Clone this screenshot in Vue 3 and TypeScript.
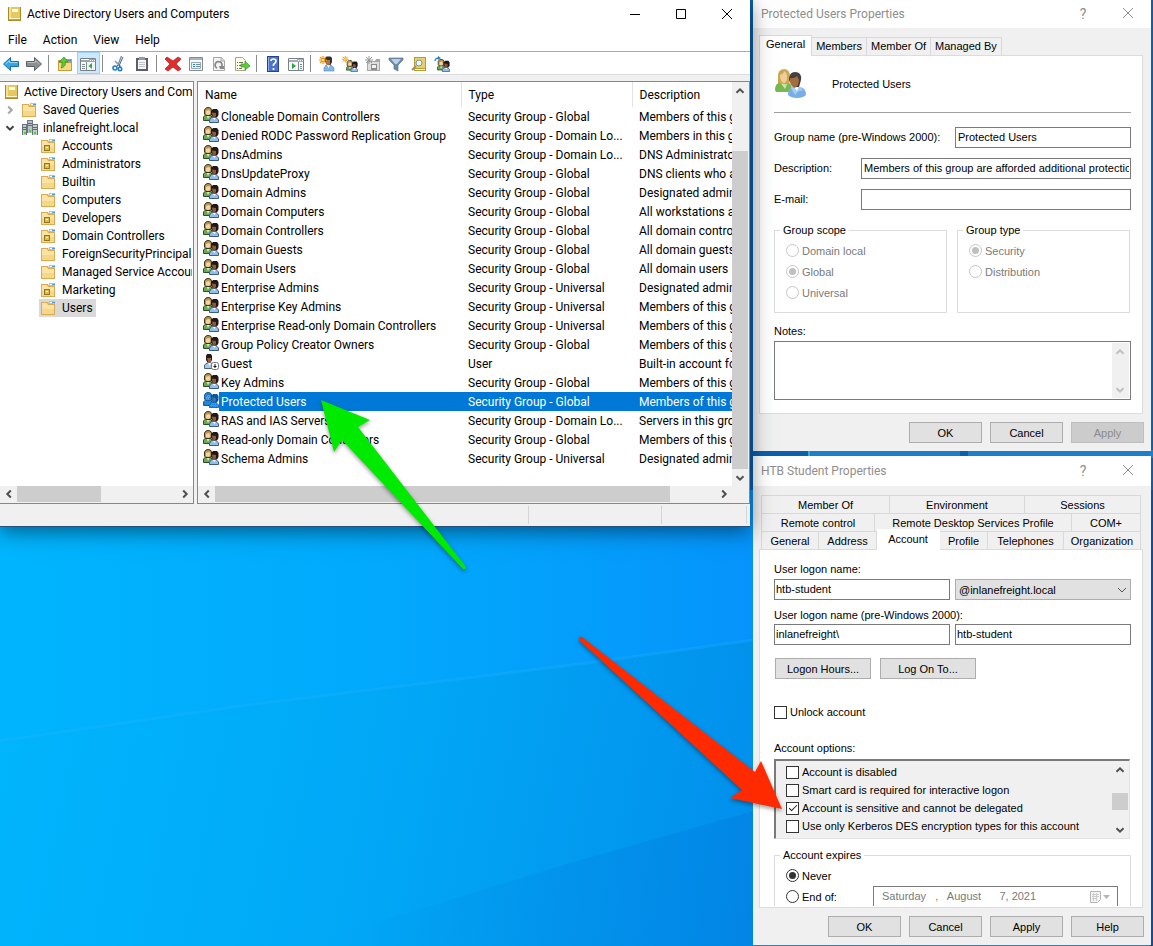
<script setup lang="ts">
import { ref } from 'vue'

interface TreeNode { label: string; icon: string }
interface DirectoryEntry { name: string; type: string; description: string; icon?: string }

const tools: string[][] = [
  ['back', 'forward'],
  ['folder-up', 'tree-pane'],
  ['cut', 'clipboard'],
  ['delete', 'properties', 'refresh', 'export'],
  ['help', 'action-pane'],
  ['new-user', 'new-group', 'new-ou', 'filter', 'find', 'add-member'],
]

const nodes: TreeNode[] = [
  { label: 'Accounts', icon: 'ou' },
  { label: 'Administrators', icon: 'ou' },
  { label: 'Builtin', icon: 'folder' },
  { label: 'Computers', icon: 'folder' },
  { label: 'Developers', icon: 'ou' },
  { label: 'Domain Controllers', icon: 'ou' },
  { label: 'ForeignSecurityPrincipals', icon: 'folder' },
  { label: 'Managed Service Accounts', icon: 'folder' },
  { label: 'Marketing', icon: 'ou' },
  { label: 'Users', icon: 'folder' },
]
const selectedNode = ref('Users')

const GLOBAL = 'Security Group - Global'
const LOCAL = 'Security Group - Domain Lo...'
const UNIVERSAL = 'Security Group - Universal'
const entries: DirectoryEntry[] = [
  { name: 'Cloneable Domain Controllers', type: GLOBAL, description: 'Members of this group' },
  { name: 'Denied RODC Password Replication Group', type: LOCAL, description: 'Members in this group' },
  { name: 'DnsAdmins', type: LOCAL, description: 'DNS Administrators' },
  { name: 'DnsUpdateProxy', type: GLOBAL, description: 'DNS clients who are' },
  { name: 'Domain Admins', type: GLOBAL, description: 'Designated administrators' },
  { name: 'Domain Computers', type: GLOBAL, description: 'All workstations and' },
  { name: 'Domain Controllers', type: GLOBAL, description: 'All domain controllers' },
  { name: 'Domain Guests', type: GLOBAL, description: 'All domain guests' },
  { name: 'Domain Users', type: GLOBAL, description: 'All domain users' },
  { name: 'Enterprise Admins', type: UNIVERSAL, description: 'Designated administrators' },
  { name: 'Enterprise Key Admins', type: UNIVERSAL, description: 'Members of this group' },
  { name: 'Enterprise Read-only Domain Controllers', type: UNIVERSAL, description: 'Members of this group' },
  { name: 'Group Policy Creator Owners', type: GLOBAL, description: 'Members of this group' },
  { name: 'Guest', type: 'User', description: 'Built-in account for', icon: 'guest' },
  { name: 'Key Admins', type: GLOBAL, description: 'Members of this group' },
  { name: 'Protected Users', type: GLOBAL, description: 'Members of this group' },
  { name: 'RAS and IAS Servers', type: LOCAL, description: 'Servers in this group' },
  { name: 'Read-only Domain Controllers', type: GLOBAL, description: 'Members of this group' },
  { name: 'Schema Admins', type: UNIVERSAL, description: 'Designated administrators' },
]
const selectedEntry = ref('Protected Users')

const groupTabs = ['General', 'Members', 'Member Of', 'Managed By']
const groupTab = ref('General')
const groupName = ref('Protected Users')
const groupDescription = ref('Members of this group are afforded additional protections against authentication')
const groupEmail = ref('')

const userTabRows: string[][] = [
  ['Member Of', 'Environment', 'Sessions'],
  ['Remote control', 'Remote Desktop Services Profile', 'COM+'],
  ['General', 'Address', 'Account', 'Profile', 'Telephones', 'Organization'],
]
const userTab = ref('Account')
const logonName = ref('htb-student')
const legacyDomain = ref('inlanefreight\\')
const legacyName = ref('htb-student')
const unlock = ref(false)
const options = ref([
  { label: 'Account is disabled', on: false },
  { label: 'Smart card is required for interactive logon', on: false },
  { label: 'Account is sensitive and cannot be delegated', on: true },
  { label: 'Use only Kerberos DES encryption types for this account', on: false },
])
const expires = ref('never')
const expiryDate = 'Saturday   ,   August      7, 2021'
</script>

<template>
  <div class="desktop">
    <svg class="symbols" width="0" height="0" aria-hidden="true">
      <symbol id="book" viewBox="0 0 16 16">
        <path d="M2 1h13v14H2z" fill="#a8892c" /><path d="M3 1h11v11H3z" fill="#e6c95c" /><path d="M3 1h2v11H3z" fill="#f4e08c" />
        <path d="M6 3h6v3H6z" fill="#fffef0" /><path d="M3 12h11v2H3z" fill="#fff6cf" /><path d="M3 13h11v1H3z" fill="#c9a93c" />
      </symbol>
      <symbol id="folder" viewBox="0 0 16 16">
        <path d="M8 1h6v4H8z" fill="#e9bd58" /><path d="M9 2h4v1H9z" fill="#fff" /><path d="M11 2h3v1h-3z" fill="#4a9be0" />
        <path d="M0 2h7l1 2h6v11H0z" fill="#d9ab52" /><path d="M1 3h5l1 2h6v9H1z" fill="#fbe3a4" /><path d="M1 9h12v5H1z" fill="#f6d687" />
      </symbol>
      <symbol id="ou" viewBox="0 0 16 16">
        <use href="#folder" /><path d="M3 7h6v6H3z" fill="#947520" /><path d="M4 8h4v4H4z" fill="#d9be56" /><path d="M5 9h2v1H5z" fill="#fff8d0" />
      </symbol>
      <symbol id="servers" viewBox="0 0 16 16">
        <path d="M5 0h6v13H5z" fill="#707982" /><path d="M6 1h4v12H6z" fill="#b8c0c7" /><path d="M0 4h5v11H0zM10 4h6v11h-6z" fill="#69727b" />
        <path d="M1 5h3v10H1zM11 5h4v10h-4z" fill="#c3cad0" /><path d="M6 3.500h4M6 5.500h4M1 7.500h3M1 9.500h3M11 7.500h4M11 9.500h4" stroke="#5f6871" />
        <path d="M2 12h2v2H2zM7 10h2v2H7zM12 12h2v2h-2z" fill="#45d827" />
      </symbol>
      <symbol id="group" viewBox="0 0 16 16">
        <path d="M.5 13.500V10L2.500 8H7l2 2v3.500z" fill="#6aa851" stroke="#2e4f26" /><path d="M3.500 8.500h3.500L5 12z" fill="#d8ecc8" />
        <path d="M1.500 7V3L3 1 5 .5 7.500 1 8.500 3v4L7 8.500H3z" fill="#b79a50" stroke="#3d3119" /><path d="M3 4l3-1 1 1v3L5 8 3 7z" fill="#f3d3a6" />
        <path d="M6.500 15.500V13l2-2.500H13l2.500 2.500v2.500z" fill="#93bdea" stroke="#3b5d84" /><path d="M9.500 10.500H13L11.500 13z" fill="#fff" />
        <path d="M8 8V4l2-2h4l1.500 2v4L14 10.500h-4z" fill="#1f1816" /><path d="M9 5.500l4 .5v3L11.500 10.500 9.500 9z" fill="#8c5a37" />
      </symbol>
      <symbol id="group-selected" viewBox="0 0 16 16">
        <path d="M.5 13.500V10L2.500 8H7l2 2v3.500z" fill="#3288ad" stroke="#125c98" />
        <path d="M1.500 7V3L3 1 5 .5 7.500 1 8.500 3v4L7 8.500H3z" fill="#3783b9" stroke="#155996" /><path d="M3 4l3-1 1 1v3L5 8 3 7z" fill="#6ba2ca" />
        <path d="M6.500 15.500V13l2-2.500H13l2.500 2.500v2.500z" fill="#4796dd" stroke="#176bbc" />
        <path d="M8 8V4l2-2h4l1.500 2v4L14 10.500h-4z" fill="#0d508f" /><path d="M9 5.500l4 .5v3L11.500 10.500 9.500 9z" fill="#3f75a8" />
        <path d="M2 2.500h12M1 4.500h14M2 6.500h13M2 8.500h12M1 10.500h13M1 12.500h14M7 14.500h8" stroke="#0877d4" stroke-dasharray="1 1" opacity=".7" />
      </symbol>
      <symbol id="guest" viewBox="0 0 16 16">
        <path d="M1.500 14.500V11L4 9h4l3 2v3.500z" fill="#a7c7e7" stroke="#48627f" /><path d="M5 9h3l-1.500 3z" fill="#fff" />
        <path d="M3 6V2l1-2h4l1 2v4L7.500 8.500h-3z" fill="#241b17" /><path d="M4 4h4v3L6.500 9 5 8z" fill="#95613c" />
        <rect x="8.500" y="8.500" width="7" height="7" rx="2" fill="#fff" stroke="#777" /><path d="M11.500 10h1v2H14l-2 2-2-2h1.500z" fill="#111" />
      </symbol>
      <symbol id="person" viewBox="0 0 16 16">
        <path d="M5 15v-3l2-3h5l3 3v3z" fill="#86b5e4" stroke="#5885b4" stroke-width=".6" /><path d="M8 9h3L9.500 12z" fill="#fff" />
        <path d="M6 6V2L7.500.5h4L13 2v4l-1.500 3h-3z" fill="#3b2c22" /><path d="M6.500 4H11v4l-1 1.500L7.500 8.500z" fill="#a8744b" />
      </symbol>
      <symbol id="spark" viewBox="0 0 16 16"><path d="M4 0v8M0 4h8M1 1l6 6M7 1L1 7" stroke="#ee9211" stroke-width="1.200" /><path d="M3 3h2v2H3z" fill="#ffe680" /></symbol>
      <symbol id="back" viewBox="0 0 16 16"><path d="M.5 8l7-6.500v4h8v5h-8v4z" fill="#36a7e5" stroke="#176fab" /><path d="M2.500 8l4-3.500v2h8" fill="none" stroke="#92dafd" /></symbol>
      <symbol id="forward" viewBox="0 0 16 16"><path d="M15.500 8l-7-6.500v4h-8v5h8v4z" fill="#8b8f92" stroke="#5d6265" /><path d="M1.500 6.500h8v-2l4 3.500" fill="none" stroke="#b9bdc0" /></symbol>
      <symbol id="folder-up" viewBox="0 0 16 16"><path d="M1 4h6l1-1h7v12H1z" fill="#c99d3c" /><path d="M2 7h12v7H2z" fill="#f7d985" /><path d="M11 4h3v1h-3z" fill="#4695d1" /><path d="M4 12c4-1 5-4 4-6h3L7 1 2 6h3c0 3 0 4-1 6z" fill="#60ca34" stroke="#288b1f" stroke-width=".7" /></symbol>
      <symbol id="tree-pane" viewBox="0 0 16 16"><path d="M.5 2.500h15v12H.5z" fill="#fff" stroke="#75808b" /><path d="M1 3h14v3H1z" fill="#9ba7b1" /><path d="M1 3.500h8M10 4.500h1M12 4.500h1M14 4.500h1" stroke="#fff" /><path d="M6.500 6v8M2 8.500h3M2 10.500h3M2 12.500h3" stroke="#7d8993" /><path d="M7 6h8v8H7z" fill="#f1f5f8" /><path d="M12 7v6L8.500 10z" fill="#2eaa3b" /></symbol>
      <symbol id="action-pane" viewBox="0 0 16 16"><path d="M.5 2.500h15v12H.5z" fill="#f7f8f8" stroke="#7a8288" /><path d="M1 3h14v3H1z" fill="#a5adb3" /><path d="M1 3.500h8M10 4.500h1M12 4.500h1M14 4.500h1" stroke="#fff" /><path d="M10.500 6v8M12 8.500h2M12 10.500h2M12 12.500h2" stroke="#7c8b98" /><path d="M4 7v6l4-3z" fill="#26a33a" /></symbol>
      <symbol id="cut" viewBox="0 0 16 16"><path d="M10.500 0L7 9M4 5l6 6" stroke="#8199ae" stroke-width="1.500" /><path d="M12 1L8 10M7 9l-2 2M8 9l1 3" stroke="#466b8a" /><circle cx="4" cy="12" r="2" fill="none" stroke="#237fc4" stroke-width="1.600" /><circle cx="9" cy="13" r="1.700" fill="none" stroke="#237fc4" stroke-width="1.600" /></symbol>
      <symbol id="clipboard" viewBox="0 0 16 16"><path d="M2 2h12v13H2z" fill="#5c6064" /><path d="M4 4h8v9H4z" fill="#f5f6f7" /><path d="M5 1h6v3H5z" fill="#989da1" /><path d="M5 6.500h6M5 8.500h6M5 10.500h6" stroke="#c2c6ca" /></symbol>
      <symbol id="delete" viewBox="0 0 16 16"><path d="M2 1l6 4 5-4 3 2-5 5 5 5-3 2-5-4-5 4-3-2 5-5-5-5z" fill="#e42d2b" stroke="#ad1719" stroke-width=".7" /></symbol>
      <symbol id="properties" viewBox="0 0 16 16"><path d="M1.500 1.500h13v13h-13z" fill="#f8fafb" stroke="#838c93" /><path d="M2 2h12v2H2z" fill="#abb4bb" /><path d="M3.500 6.500h9v6h-9z" fill="#edf4fa" stroke="#97a8b5" /><path d="M5 8h2v1H5zM5 10h2v1H5z" fill="#2b81c1" /><path d="M8 8.500h4M8 10.500h4" stroke="#7090aa" /></symbol>
      <symbol id="refresh" viewBox="0 0 16 16"><path d="M2.500 1.500h8l3 3v10h-11z" fill="#f4f4f4" stroke="#a6a6a6" /><path d="M10 1v4h4" fill="#ddd" stroke="#aaa" /><path d="M6 12.200A3.500 3.500 0 1 1 10.500 11" fill="none" stroke="#888" stroke-width="1.700" /><path d="M8 10h5v3H9z" fill="#888" /></symbol>
      <symbol id="export" viewBox="0 0 16 16"><path d="M1.500 1.500h7l3 3v10h-10z" fill="#fffce9" stroke="#aaa287" /><path d="M3 6.500h1M5 6.500h4M3 9.500h1M5 9.500h4M3 12.500h1M5 12.500h3" stroke="#6d6f62" /><path d="M7 8h4V5l5 5-5 4v-3H7z" fill="#62cc32" stroke="#34972a" stroke-width=".7" /></symbol>
      <symbol id="help" viewBox="0 0 16 16"><path d="M2 0h12v16H2z" fill="#24428e" /><path d="M3 1h10v14H3z" fill="#4a72ce" /><path d="M3 1h1v14H3z" fill="#91acea" /><path d="M6 5q0-2 2.500-2T11 5q0 1.500-1.500 2.500T8.500 10M8.500 12v2" fill="none" stroke="#fff" stroke-width="1.700" /></symbol>
      <symbol id="new-user" viewBox="0 0 16 16"><use href="#person" /><use href="#spark" /></symbol>
      <symbol id="new-group" viewBox="0 0 16 16"><use href="#group" x="4" y="4" width="12" height="12" /><use href="#spark" width="13" height="13" /></symbol>
      <symbol id="new-ou" viewBox="0 0 16 16"><path d="M2 5h8l1-2h4v12H2z" fill="#a7a7a7" /><path d="M3 6h11v8H3z" fill="#dedede" /><path d="M6 8h6v6H6z" fill="#8b8b8b" /><path d="M7 9h4v3H7z" fill="#f2f2f2" /><path d="M4 0v8M0 4h8M1 1l6 6M7 1L1 7" stroke="#969696" /></symbol>
      <symbol id="filter" viewBox="0 0 16 16"><path d="M1 2h14v2L10 9v6l-4-2V9L1 4z" fill="#6f8baa" stroke="#4d6884" stroke-width=".6" /><path d="M3 3h10L9 8H7z" fill="#b9d0e5" /></symbol>
      <symbol id="find" viewBox="0 0 16 16"><path d="M3 1h12v14H3z" fill="#b99c31" /><path d="M4 2h10v10H4z" fill="#e9d06c" /><path d="M4 13h10v1H4z" fill="#fff6c6" /><path d="M1 14l4-4" stroke="#a98b6f" stroke-width="2" /><circle cx="8" cy="7" r="3" fill="#e9f6fc" stroke="#7d949f" /></symbol>
      <symbol id="add-member" viewBox="0 0 16 16"><use href="#group" x="3" y="3" width="13" height="13" /><path d="M1 5q0-3 4-3" fill="none" stroke="#2682c6" stroke-width="1.300" /><path d="M4 0l3 2-3 2z" fill="#2682c6" /></symbol>
      <symbol id="group-large" viewBox="0 0 32 32">
        <path d="M1 22q0-7 6-8h6q5 1 5 8l-2 2H2z" fill="#79b84f" /><path d="M6 14h8l-3 7z" fill="#c8e6ae" />
        <path d="M4 10q-1-9 7-9 5 1 5 8v5q-3 3-6 2l-6-1z" fill="#c9a753" /><path d="M6 7q3-1 5-4l2 4v4q-1 4-3 4-4-1-4-8z" fill="#f1cb98" />
        <path d="M14 27q0-7 5-8h7q6 1 6 8-3 3-9 3t-9-3z" fill="#78aee5" /><path d="M17 20q2-2 5-1h5l2 4q-4-2-8 4z" fill="#a5ccf3" /><path d="M19 18h6l-2 5z" fill="#fff" />
        <path d="M15 12q0-8 6-8 7 0 6 8l-2 7h-5z" fill="#463f3d" /><path d="M16 10q4 1 7-2l2 4-1 5-3 3q-4-1-5-6z" fill="#a56d3d" />
      </symbol>
      <symbol id="chev" viewBox="0 0 10 10"><path d="M1.500 6.800L5 3.300l3.500 3.500" fill="none" stroke="currentColor" stroke-width="2" /></symbol>
      <symbol id="cross" viewBox="0 0 12 12"><path d="M1 1l10 10M11 1L1 11" fill="none" stroke="currentColor" /></symbol>
    </svg>

    <svg class="wallpaper" viewBox="0 0 1153 946" preserveAspectRatio="none" aria-hidden="true">
      <defs>
        <linearGradient id="sky" x1="0" y1="0" x2="1153" y2="0" gradientUnits="userSpaceOnUse">
          <stop offset="0" stop-color="#00b5fe" /><stop offset=".35" stop-color="#02a8fc" /><stop offset=".65" stop-color="#0594fb" /><stop offset="1" stop-color="#0a5fc0" />
        </linearGradient>
        <linearGradient id="ray" x1="0" y1="700" x2="800" y2="860" gradientUnits="userSpaceOnUse">
          <stop offset="0" stop-color="#00b5fc" /><stop offset=".5" stop-color="#01a7f6" /><stop offset="1" stop-color="#028cea" />
        </linearGradient>
        <linearGradient id="fold" x1="340" y1="0" x2="760" y2="0" gradientUnits="userSpaceOnUse">
          <stop offset="0" stop-color="#0078dc" stop-opacity="0" /><stop offset="1" stop-color="#0078dc" stop-opacity=".4" />
        </linearGradient>
      </defs>
      <path d="M0 0h1153v946H0z" fill="url(#sky)" />
      <path d="M0 741L240 706 588 663 753 640 1153 590V946H0z" fill="url(#ray)" />
      <path d="M0 741L240 706 588 663 753 640" fill="none" stroke="#28b5ff" stroke-width="3" opacity=".25" />
      <path d="M300 946L560 866 753 811V946z" fill="url(#fold)" />
      <path d="M750 0h403v490H750z" fill="#0a60ae" /><path d="M808 450h152v8H808zM968 450h185v8H968z" fill="#1b80c8" /><path d="M808 450h2v8h-2z" fill="#2bb3c9" />
      <path d="M1150 490h3v456h-3z" fill="#0b4ea6" />
    </svg>

    <main class="console">
      <header class="titlebar">
        <svg class="icon"><use href="#book" /></svg>
        <h1>Active Directory Users and Computers</h1>
        <div class="window-buttons">
          <button type="button" aria-label="Minimize"><svg width="12" height="12"><path d="M1 6.500h10" stroke="#000" /></svg></button>
          <button type="button" aria-label="Maximize"><svg width="12" height="12"><path d="M1.500 1.500h9v9h-9z" fill="none" stroke="#000" /></svg></button>
          <button type="button" aria-label="Close"><svg width="12" height="12"><use href="#cross" /></svg></button>
        </div>
      </header>
      <nav class="menu"><button v-for="m in ['File', 'Action', 'View', 'Help']" :key="m" type="button">{{ m }}</button></nav>
      <div class="toolbar" role="toolbar" aria-label="Standard">
        <div v-for="(set, i) in tools" :key="i" class="toolset">
          <button v-for="t in set" :key="t" type="button" :aria-label="t" :class="{ pressed: t === 'tree-pane' }"><svg class="icon"><use :href="'#' + t" /></svg></button>
        </div>
      </div>
      <div class="panes">
        <section class="tree-pane">
          <ul class="tree">
            <li class="root"><span class="node"><svg class="icon"><use href="#book" /></svg><span class="node-label">Active Directory Users and Computers</span></span></li>
            <li><button type="button" class="twisty closed" aria-label="Expand"><svg width="10" height="10"><use href="#chev" /></svg></button><span class="node"><svg class="icon"><use href="#folder" /></svg><span class="node-label">Saved Queries</span></span></li>
            <li><button type="button" class="twisty" aria-label="Collapse"><svg width="10" height="10"><use href="#chev" /></svg></button><span class="node"><svg class="icon"><use href="#servers" /></svg><span class="node-label">inlanefreight.local</span></span></li>
            <li v-for="n in nodes" :key="n.label" class="leaf"><span class="node" :class="{ selected: selectedNode === n.label }" @click="selectedNode = n.label"><svg class="icon"><use :href="'#' + n.icon" /></svg><span class="node-label">{{ n.label }}</span></span></li>
          </ul>
          <div class="hscroll">
            <button type="button" aria-label="Scroll left"><svg class="left"><use href="#chev" /></svg></button>
            <div class="htrack"><i class="tree-thumb"></i></div>
            <button type="button" aria-label="Scroll right"><svg class="right"><use href="#chev" /></svg></button>
          </div>
        </section>
        <section class="list-pane">
          <div class="list-view">
            <table>
              <colgroup><col class="c-name"><col class="c-type"><col></colgroup>
              <thead><tr><th>Name</th><th>Type</th><th>Description</th></tr></thead>
              <tbody>
                <tr v-for="e in entries" :key="e.name" :class="{ selected: selectedEntry === e.name }" @click="selectedEntry = e.name">
                  <td><span class="entry"><svg class="icon"><use :href="'#' + (e.icon ?? (selectedEntry === e.name ? 'group-selected' : 'group'))" /></svg><span class="entry-name">{{ e.name }}</span></span></td>
                  <td>{{ e.type }}</td>
                  <td>{{ e.description }}</td>
                </tr>
              </tbody>
            </table>
          </div>
          <div class="vscroll">
            <button type="button" aria-label="Scroll up"><svg><use href="#chev" /></svg></button>
            <div class="vtrack"><i class="list-vthumb"></i></div>
            <button type="button" aria-label="Scroll down"><svg class="down"><use href="#chev" /></svg></button>
          </div>
          <div class="hscroll">
            <button type="button" aria-label="Scroll left"><svg class="left"><use href="#chev" /></svg></button>
            <div class="htrack"><i class="list-thumb"></i></div>
            <button type="button" aria-label="Scroll right"><svg class="right"><use href="#chev" /></svg></button>
          </div>
          <div class="corner"></div>
        </section>
      </div>
      <footer class="status"><span></span><span></span><span></span></footer>
    </main>

    <div class="dialogs">
      <section class="dialog" role="dialog" aria-labelledby="group-title">
        <header class="caption"><h2 id="group-title">Protected Users Properties</h2><button type="button">?</button><button type="button" aria-label="Close"><svg width="12" height="12"><use href="#cross" /></svg></button></header>
        <div class="tabs" role="tablist"><button v-for="t in groupTabs" :key="t" type="button" role="tab" :aria-selected="t === groupTab" @click="groupTab = t">{{ t }}</button></div>
        <div class="page">
          <div class="identity"><svg width="32" height="32"><use href="#group-large" /></svg><span>Protected Users</span></div>
          <div class="fields">
            <label for="g-name">Group name (pre-Windows 2000):</label><input id="g-name" v-model="groupName" type="text" class="half">
            <label for="g-desc">Description:</label><input id="g-desc" v-model="groupDescription" type="text">
            <label for="g-mail">E-mail:</label><input id="g-mail" v-model="groupEmail" type="text">
          </div>
          <div class="pair scopes">
            <fieldset disabled>
              <legend>Group scope</legend>
              <label class="choice"><input type="radio" name="scope">Domain local</label>
              <label class="choice"><input type="radio" name="scope" checked>Global</label>
              <label class="choice"><input type="radio" name="scope">Universal</label>
            </fieldset>
            <fieldset disabled>
              <legend>Group type</legend>
              <label class="choice"><input type="radio" name="gtype" checked>Security</label>
              <label class="choice"><input type="radio" name="gtype">Distribution</label>
            </fieldset>
          </div>
          <label for="g-notes" class="caption-label notes-label">Notes:</label>
          <div class="notes">
            <textarea id="g-notes"></textarea>
            <div class="vscroll idle">
              <button type="button" disabled aria-label="Scroll up"><svg><use href="#chev" /></svg></button>
              <div class="vtrack"></div>
              <button type="button" disabled aria-label="Scroll down"><svg class="down"><use href="#chev" /></svg></button>
            </div>
          </div>
        </div>
        <footer class="actions"><button type="button" class="btn">OK</button><button type="button" class="btn">Cancel</button><button type="button" class="btn" disabled>Apply</button></footer>
      </section>

      <section class="dialog user" role="dialog" aria-labelledby="user-title">
        <header class="caption"><h2 id="user-title">HTB Student Properties</h2><button type="button">?</button><button type="button" aria-label="Close"><svg width="12" height="12"><use href="#cross" /></svg></button></header>
        <div class="tab-rows" role="tablist">
          <div v-for="(row, i) in userTabRows" :key="i" :class="'tab-row row-' + i"><button v-for="t in row" :key="t" type="button" role="tab" :aria-selected="t === userTab" @click="userTab = t">{{ t }}</button></div>
        </div>
        <div class="page account">
          <label for="u-logon" class="caption-label">User logon name:</label>
          <div class="pair logon">
            <input id="u-logon" v-model="logonName" type="text">
            <select aria-label="UPN suffix"><option>@inlanefreight.local</option></select>
          </div>
          <label for="u-legacy" class="caption-label legacy-label">User logon name (pre-Windows 2000):</label>
          <div class="pair legacy">
            <input v-model="legacyDomain" type="text" aria-label="Domain">
            <input id="u-legacy" v-model="legacyName" type="text">
          </div>
          <div class="logon-buttons"><button type="button" class="btn">Logon Hours...</button><button type="button" class="btn">Log On To...</button></div>
          <label class="check unlock"><input v-model="unlock" type="checkbox">Unlock account</label>
          <div id="opt-label" class="caption-label options-label">Account options:</div>
          <div class="options" role="group" aria-labelledby="opt-label">
            <div class="option-list"><label v-for="o in options" :key="o.label" class="check"><input v-model="o.on" type="checkbox">{{ o.label }}</label></div>
            <div class="vscroll">
              <button type="button" aria-label="Scroll up"><svg><use href="#chev" /></svg></button>
              <div class="vtrack"><i class="options-thumb"></i></div>
              <button type="button" aria-label="Scroll down"><svg class="down"><use href="#chev" /></svg></button>
            </div>
          </div>
          <div class="expiry">
            <fieldset>
              <legend>Account expires</legend>
              <label class="choice"><input v-model="expires" type="radio" name="expires" value="never">Never</label>
              <div class="end-row">
                <label class="choice"><input v-model="expires" type="radio" name="expires" value="date">End of:</label>
                <div class="date">
                  <input type="text" :value="expiryDate" disabled aria-label="Expiry date">
                  <svg width="28" height="14" aria-hidden="true"><path d="M1.500 1.500h10v8l-3 3h-7z" fill="#f4f4f4" stroke="#b5b5b5" /><path d="M3 4.500h7M3 6.500h7M3 8.500h5M4.500 3v8M7.500 3v8" stroke="#ccc" /><path d="M14 5h7l-3.500 4z" fill="#b5b5b5" /></svg>
                </div>
              </div>
            </fieldset>
          </div>
        </div>
        <footer class="actions"><button type="button" class="btn">OK</button><button type="button" class="btn">Cancel</button><button type="button" class="btn">Apply</button><button type="button" class="btn">Help</button></footer>
      </section>
    </div>

    <svg class="arrows" width="1153" height="946" viewBox="0 0 1153 946" aria-hidden="true">
      <path d="M321 400L370 420 358 427 466 567Q466 570 463 569L342 440 334 452z" fill="#00ea00" />
      <path d="M782 809L730 798 742 790 579 640Q578 636 582 637L755 772 761 761z" fill="#ff2a00" />
    </svg>
  </div>
</template>

<style>
html, body { margin: 0; }
</style>

<style scoped>
.desktop {
  --edge: #828790;
  position: relative;
  display: grid;
  grid-template-columns: minmax(0, 1fr) 398px;
  column-gap: 3px;
  align-items: start;
  min-height: 100vh;
  padding-right: 2px;
  box-sizing: border-box;
  overflow: hidden;
  font: 11px/14px "Liberation Sans", Arial, sans-serif;
  color: #000;
}
.desktop *, .desktop *::before { box-sizing: border-box; }
.symbols { position: absolute; }
.wallpaper { position: absolute; inset: 0; width: 100%; height: 100%; }
.arrows { position: absolute; top: 0; left: 0; z-index: 5; pointer-events: none; filter: drop-shadow(0 2px 2px rgba(0, 0, 0, .4)); }
button, input, select, textarea { font: inherit; color: inherit; margin: 0; border-radius: 0; }
button { padding: 0; border: 0; background: none; }
h1, h2 { margin: 0; font: inherit; }
.icon { width: 16px; height: 16px; flex: none; }

.console {
  position: relative;
  z-index: 2;
  background: #fff;
  font: 12px/18px Roboto, "Segoe UI", sans-serif;
  border-bottom: 1px solid #26507a;
  box-shadow: 0 4px 20px rgba(0, 0, 0, .5);
}
.titlebar { display: flex; align-items: center; height: 28px; padding-left: 6px; }
.titlebar h1 { flex: 1; padding-left: 5px; }
.window-buttons { display: flex; }
.window-buttons button { width: 46px; height: 26px; display: grid; place-items: center; }
.menu { display: flex; height: 23px; }
.menu button { padding: 0 8px; }
.toolbar { display: flex; height: 24px; border-top: 1px solid #ababab; border-bottom: 1px solid #dcdcdc; }
.toolset { display: flex; }
.toolset + .toolset::before { content: ""; width: 1px; margin: 3px 5px 2px 2px; background: #8c8c8c; }
.toolset button { width: 23px; display: grid; place-items: center start; padding: 1px 0 0 2px; border: 1px solid transparent; }
.toolset .pressed { background: #cce8ff; border-color: #99d1ff; }

.panes { display: grid; grid-template-columns: 194px minmax(0, 1fr); gap: 3px; padding-top: 6px; background: #f0f0f0; }
.tree-pane { display: flex; flex-direction: column; background: #fff; border: 1px solid var(--edge); border-left: 0; min-width: 0; }
.tree { flex: 1; list-style: none; margin: 0; padding: 1px 1px 0 0; overflow: hidden; }
.tree li { display: flex; height: 18px; white-space: nowrap; }
.root { padding-left: 1px; }
.leaf { padding-left: 39px; }
.node { display: flex; align-items: center; gap: 5px; min-width: 0; padding: 0 2px; }
.node-label { overflow: hidden; }
.node.selected { background: #d9d9d9; }
.root .node, .leaf .node { padding-right: 0; }
.leaf .node.selected { padding-right: 3px; }
.twisty { width: 20px; flex: none; display: grid; place-items: center; color: #404040; }
.twisty svg { transform: rotate(180deg); }
.twisty.closed { color: #a6a6a6; }
.twisty.closed svg { transform: rotate(90deg); }

.list-pane { display: grid; grid-template-columns: minmax(0, 1fr) 17px; background: #fff; border: 1px solid var(--edge); min-width: 0; }
.list-view { overflow: hidden; padding-bottom: 18px; }
table { width: 100%; table-layout: fixed; border-collapse: collapse; }
.c-name { width: 263px; }
.c-type { width: 171px; }
th, td { font-weight: 400; text-align: left; white-space: nowrap; overflow: hidden; padding: 0 0 0 7px; }
th { height: 25px; border-right: 1px solid #e2e2e2; }
th:last-child { border-right: 0; }
td { height: 19px; }
td:first-child { padding-left: 5px; }
.entry { display: flex; height: 19px; }
.entry-name { flex: 1; padding: 1px 0 0 2px; line-height: 18px; }
.selected .entry-name, .selected td + td { background: #0078d7; color: #fff; }

.hscroll { display: flex; height: 17px; padding-bottom: 1px; background: #f0f0f0; }
.hscroll button { width: 17px; display: grid; place-items: center; color: #505050; }
.hscroll svg, .vscroll svg { width: 10px; height: 10px; }
.htrack { flex: 1; }
.htrack i { display: block; height: 100%; background: #cdcdcd; }
.tree-thumb { width: 53%; }
.list-thumb { width: 91%; }
.left { transform: rotate(-90deg); }
.right { transform: rotate(90deg); }
.down { transform: rotate(180deg); }
.vscroll { display: flex; flex-direction: column; width: 17px; background: #f0f0f0; }
.vscroll button { height: 17px; padding-right: 2px; display: grid; place-items: center; color: #505050; }
.vtrack { flex: 1; display: flex; flex-direction: column; justify-content: flex-end; }
.vtrack i { display: block; background: #cdcdcd; margin-right: 1px; }
.list-vthumb { height: 86%; }
.idle button { color: #bfbfbf; }
.corner { background: #f0f0f0; }
.status { display: grid; grid-template-columns: minmax(0, 1fr) 133px 85px 3px; height: 22px; padding: 2px 0; background: #f0f0f0; }
.status span { border-right: 1px solid #d4d4d4; }

.dialogs { position: relative; display: grid; gap: 5px; z-index: 1; }
.dialog { background: #f0f0f0; }
.caption { display: flex; align-items: center; height: 28px; padding: 0 7px 0 8px; background: #fff; color: #8e8e8e; font: 12px/18px Roboto, "Segoe UI", sans-serif; }
.caption h2 { flex: 1; padding-bottom: 1px; }
.caption button { width: 32px; height: 26px; display: grid; place-items: center; font-size: 14px; }
.caption button:last-child { margin-left: 13px; margin-bottom: 2px; }
.user .caption { height: 30px; }
.tabs { display: flex; align-items: flex-end; height: 27px; padding-left: 6px; }
.tabs button { height: 18px; padding: 0 4px; border: 1px solid #d9d9d9; border-bottom: 0; border-left: 0; line-height: 17px; }
.tabs button[aria-selected="true"] { height: 21px; margin-bottom: -1px; padding: 0 6px 3px; background: #fff; border-left: 1px solid #d9d9d9; position: relative; }
.page { margin: 0 8px 0 6px; padding: 0 11px 13px 14px; background: #fff; border: 1px solid #dcdcdc; }
.identity { display: flex; align-items: center; gap: 26px; padding: 12px 0 12px; border-bottom: 1px solid #a0a0a0; }
.fields { display: grid; grid-template-columns: 87px 94px minmax(0, 1fr); row-gap: 10px; align-items: center; padding-top: 14px; }
.fields input { grid-column: 2 / 4; }
.fields label[for="g-name"] { grid-column: 1 / 3; }
.fields .half { grid-column: 3; }
.fields label { padding-bottom: 1px; }
input[type="text"], textarea { width: 100%; min-width: 0; border: 1px solid #7a7a7a; background: #fff; outline: 0; }
input[type="text"] { height: 21px; padding: 0 1px 1px; }
.fields input[type="text"] { padding-left: 2px; }
.pair { display: grid; grid-template-columns: 1fr 1fr; }
.scopes { gap: 10px; padding: 13px 1px 0 0; }
.scopes fieldset { height: 90px; }
fieldset { margin: 0; padding: 0; border: 1px solid #dcdcdc; min-width: 0; }
legend { margin-left: 5px; padding: 0 3px; }
.choice { display: flex; align-items: center; gap: 3px; height: 21px; padding-left: 11px; }
legend + .choice { margin-top: 3px; }
fieldset:disabled .choice { color: #7a7a7a; }
input[type="radio"], input[type="checkbox"] { appearance: none; width: 13px; height: 13px; flex: none; display: grid; place-items: center; border: 1px solid #333; background: #fff; }
input[type="radio"] { border-radius: 50%; }
input[type="radio"]:checked::before { content: ""; width: 7px; height: 7px; border-radius: 50%; background: #333; }
input[type="radio"]:disabled { border-color: #c6c6c6; }
input[type="radio"]:disabled:checked::before { background: #c0c0c0; }
input[type="checkbox"]:checked::before { content: ""; width: 8px; height: 4px; border: solid #222; border-width: 0 0 1px 1px; transform: rotate(-45deg); margin-bottom: 3px; }
.check { display: flex; align-items: center; gap: 3px; height: 18px; }
.caption-label { display: block; height: 14px; }
.notes-label { margin-top: 11px; }
.notes { display: flex; height: 59px; margin-top: 3px; padding: 1px; border: 1px solid #7a7a7a; }
.notes textarea { flex: 1; border: 0; resize: none; padding: 1px; }
.actions { display: flex; justify-content: flex-end; gap: 8px; padding: 8px 7px 8px 0; }
.btn { height: 21px; min-width: 73px; background: #e1e1e1; border: 1px solid #adadad; }
.btn:disabled { background: #ccc; border-color: #bfbfbf; color: #8b8b8b; }

.tab-rows { padding: 9px 10px 0 8px; }
.tab-row { display: grid; height: 18px; border-left: 1px solid #d9d9d9; }
.row-0 { grid-template-columns: 128fr 135fr 116fr; }
.row-1 { grid-template-columns: 113fr 197fr 69fr; }
.row-2 { grid-template-columns: 57fr 58fr 63fr 48fr 76fr 77fr; }
.tab-row button { border: 1px solid #d9d9d9; border-width: 1px 1px 0 0; }
.tab-row [aria-selected="true"] { position: relative; height: 21px; margin-top: -2px; padding-bottom: 2px; background: #fff; border-color: #fff; }
.account { padding-top: 12px; padding-bottom: 1px; }
.account .pair { gap: 5px; }
.logon { margin-top: 3px; }
.legacy-label { margin-top: 8px; }
.legacy { margin-top: 2px; }
select { appearance: none; height: 21px; width: 100%; padding: 0 3px; border: 1px solid #adadad; background: #e1e1e1 url("data:image/svg+xml,%3Csvg xmlns='http://www.w3.org/2000/svg' width='10' height='6'%3E%3Cpath d='M1 1l4 4 4-4' fill='none' stroke='%23555'/%3E%3C/svg%3E") no-repeat right 3px center; }
.logon-buttons { display: flex; gap: 9px; margin: 13px 0 0 1px; }
.logon-buttons .btn { width: 96px; }
.unlock { margin-top: 24px; }
.options-label { margin-top: 20px; }
.options { display: flex; height: 80px; margin: 4px 1px 0 0; background: #f0f0f0; border: 2px solid #7a7a7a; border-right: 1px solid #e3e3e3; border-bottom: 1px solid #e3e3e3; }
.option-list { flex: 1; padding: 2px 0 0 10px; }
.options-thumb { height: 17px; margin-bottom: 11px; }
.expiry { height: 58px; margin-top: 9px; overflow: hidden; }
.end-row { display: grid; grid-template-columns: 98px minmax(0, 1fr); padding-right: 12px; }
.date { display: flex; align-items: center; height: 21px; border: 1px solid #7a7a7a; }
.date input[type="text"] { flex: 1; height: 19px; padding-left: 8px; border: 0; color: #7a7a7a; }
</style>
